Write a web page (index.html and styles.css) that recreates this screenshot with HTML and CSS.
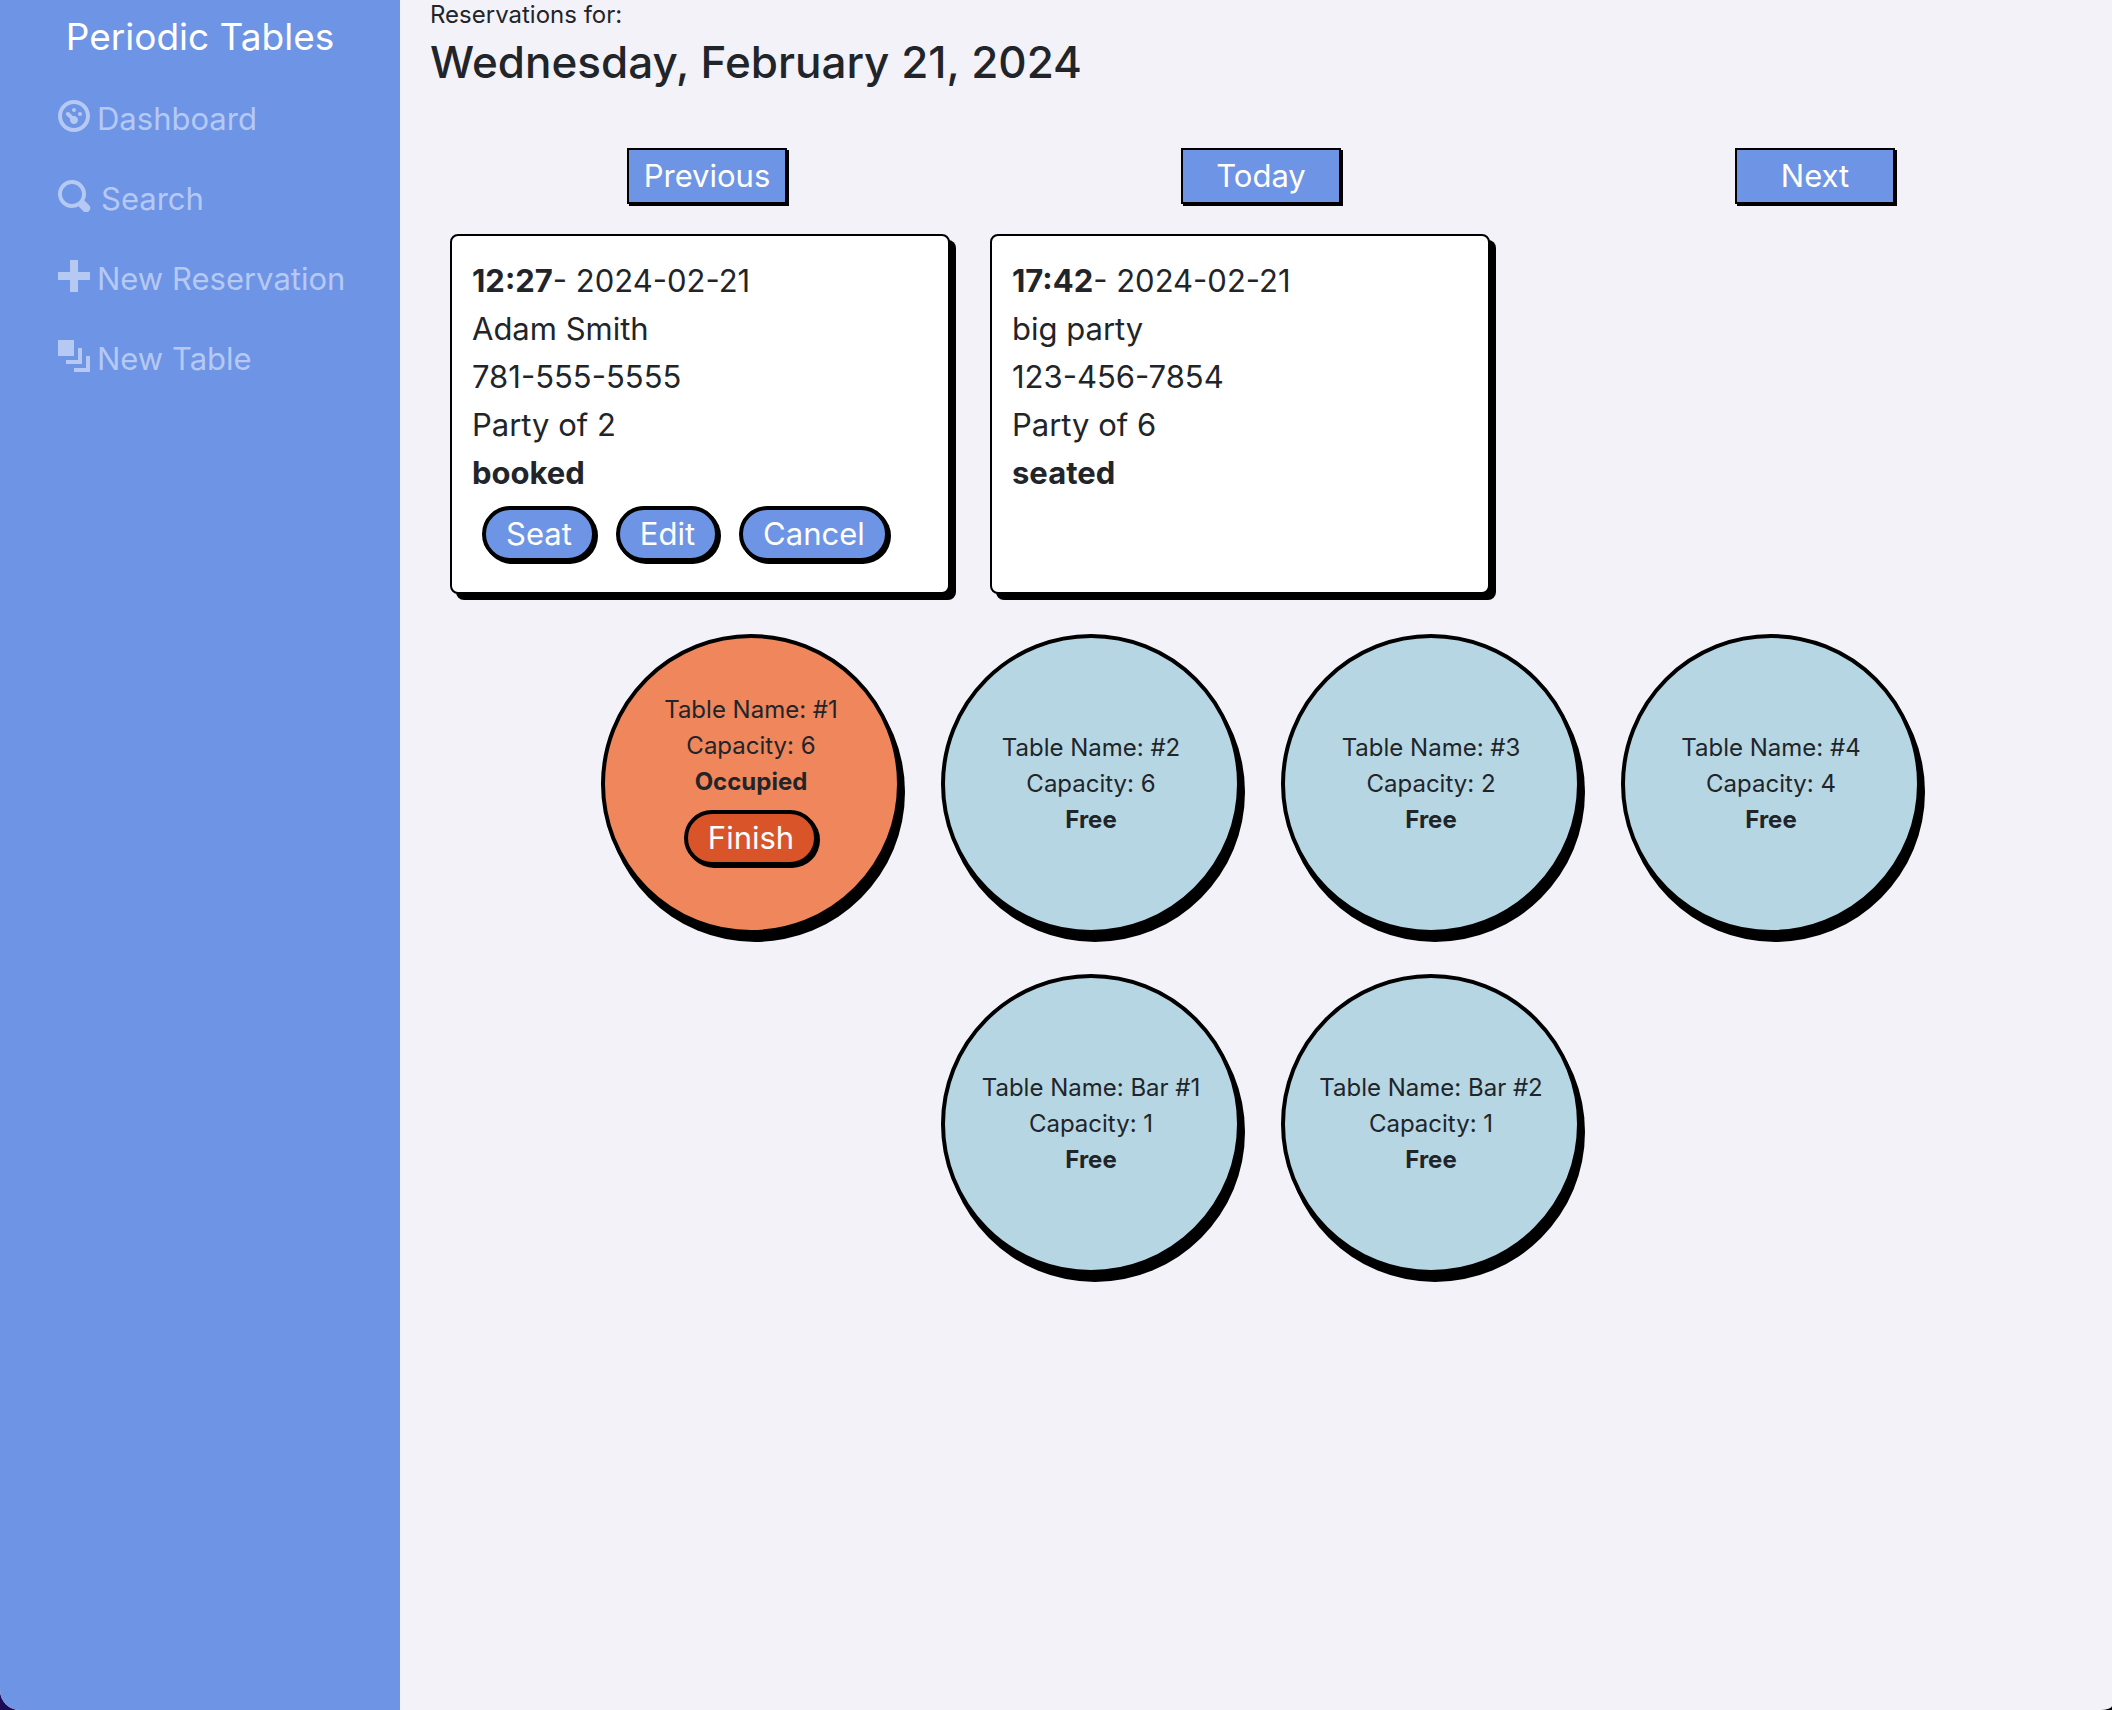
FILE: index.html
```html
<!DOCTYPE html>
<html lang="en">
<head>
  <meta charset="utf-8">
  <meta name="viewport" content="width=device-width, initial-scale=1">
  <title>Periodic Tables</title>
  <link rel="stylesheet" href="styles.css">
</head>
<body>
  <div class="app">
    <nav class="sidebar" aria-label="Main">
      <a class="brand" href="#">Periodic Tables</a>
      <ul class="menu">
        <li><a class="menu-link" href="#dashboard"><svg class="menu-icon" width="32" height="32" viewBox="0 0 8 8" aria-hidden="true"><path d="M4 0c-2.200 0-4 1.800-4 4s1.800 4 4 4 4-1.800 4-4-1.800-4-4-4zm0 1c1.660 0 3 1.340 3 3s-1.340 3-3 3-3-1.340-3-3 1.340-3 3-3zm0 1c-.28 0-.5.22-.5.5s.22.5.5.5.5-.22.5-.5-.22-.5-.5-.5zm-1.560 1a.5.5 0 0 0-.34.84l.96.91c-.02.08-.06.16-.06.25 0 .55.45 1 1 1s1-.45 1-1-.45-1-1-1c-.09 0-.17.04-.25.06l-.91-.91a.5.5 0 0 0-.4-.15zm3.060 0c-.28 0-.5.22-.5.5s.22.5.5.5.5-.22.5-.5-.22-.5-.5-.5z"/></svg>Dashboard</a></li>
        <li><a class="menu-link" href="#search"><svg class="menu-icon" width="36" height="32" viewBox="0 0 9 8" aria-hidden="true"><path d="M3.500 0c-1.930 0-3.500 1.570-3.500 3.500s1.570 3.500 3.500 3.500c.59 0 1.170-.14 1.660-.41a1 1 0 0 0 .13.13l1 1a1.020 1.020 0 1 0 1.440-1.440l-1-1a1 1 0 0 0-.16-.13c.27-.49.44-1.060.44-1.660 0-1.930-1.550-3.500-3.500-3.500zm0 1c1.390 0 2.500 1.110 2.500 2.500 0 .66-.24 1.270-.66 1.720l-.03.03a1 1 0 0 0-.13.13c-.44.4-1.040.63-1.690.63-1.390 0-2.500-1.110-2.500-2.500s1.110-2.500 2.500-2.500z"/></svg>Search</a></li>
        <li><a class="menu-link" href="#new-reservation"><svg class="menu-icon" width="32" height="32" viewBox="0 0 8 8" aria-hidden="true"><path d="M3 0v3h-3v2h3v3h2v-3h3v-2h-3v-3h-2z"/></svg>New Reservation</a></li>
        <li><a class="menu-link" href="#new-table"><svg class="menu-icon" width="32" height="32" viewBox="0 0 8 8" aria-hidden="true"><path d="M0 0v4h4v-4h-4zm5 2v3h-3v1h4v-4h-1zm2 2v3h-3v1h4v-4h-1z"/></svg>New Table</a></li>
      </ul>
    </nav>

    <main class="content">
      <header>
        <p class="eyebrow">Reservations for:</p>
        <h1 class="date">Wednesday, February 21, 2024</h1>
      </header>

      <div class="day-nav">
        <button class="day-button" type="button">Previous</button>
        <button class="day-button" type="button">Today</button>
        <button class="day-button" type="button">Next</button>
      </div>

      <section class="reservations" aria-label="Reservations">
        <article class="card">
          <p><strong>12:27</strong>- 2024-02-21</p>
          <p>Adam Smith</p>
          <p>781-555-5555</p>
          <p>Party of 2</p>
          <p><strong>booked</strong></p>
          <div class="card-actions">
            <button class="pill" type="button">Seat</button>
            <button class="pill" type="button">Edit</button>
            <button class="pill" type="button">Cancel</button>
          </div>
        </article>
        <article class="card">
          <p><strong>17:42</strong>- 2024-02-21</p>
          <p>big party</p>
          <p>123-456-7854</p>
          <p>Party of 6</p>
          <p><strong>seated</strong></p>
        </article>
      </section>

      <section class="tables" aria-label="Tables">
        <article class="seating seating-occupied">
          <p>Table Name: #1</p>
          <p>Capacity: 6</p>
          <p><strong>Occupied</strong></p>
          <button class="pill pill-finish" type="button">Finish</button>
        </article>
        <article class="seating">
          <p>Table Name: #2</p>
          <p>Capacity: 6</p>
          <p><strong>Free</strong></p>
        </article>
        <article class="seating">
          <p>Table Name: #3</p>
          <p>Capacity: 2</p>
          <p><strong>Free</strong></p>
        </article>
        <article class="seating">
          <p>Table Name: #4</p>
          <p>Capacity: 4</p>
          <p><strong>Free</strong></p>
        </article>
        <article class="seating">
          <p>Table Name: Bar #1</p>
          <p>Capacity: 1</p>
          <p><strong>Free</strong></p>
        </article>
        <article class="seating">
          <p>Table Name: Bar #2</p>
          <p>Capacity: 1</p>
          <p><strong>Free</strong></p>
        </article>
      </section>
    </main>
  </div>
</body>
</html>
```
FILE: styles.css
```css
:root {
  --blue: #6e94e6;
  --page: #f3f2f9;
  --ink: #212529;
}

* {
  box-sizing: border-box;
}

body {
  margin: 0;
  background: linear-gradient(to right, #1d0b58 50%, #000 50%);
  color: var(--ink);
  font-family: Inter, "Liberation Sans", sans-serif;
  font-size: 31px;
  line-height: 48px;
}

p,
h1,
ul {
  margin: 0;
  padding: 0;
}

button {
  font: inherit;
  color: #fff;
  background: var(--blue);
  cursor: pointer;
}

.app {
  display: flex;
  min-height: 100vh;
  overflow: hidden;
  background: var(--page);
  border-radius: 0 0 12px 20px / 0 0 4px 20px;
}

/* Sidebar */
.sidebar {
  flex: 0 0 400px;
  background: var(--blue);
}

.brand {
  display: block;
  color: #fff;
  font-size: 37px;
  line-height: 74px;
  text-align: center;
  text-decoration: none;
}

.menu {
  margin-top: 5px;
  list-style: none;
}

.menu-link {
  display: block;
  padding-left: 58px;
  color: #b6c9f2;
  line-height: 80px;
  text-decoration: none;
}

.menu-icon {
  margin-right: 7px;
  fill: currentColor;
  vertical-align: -2px;
}

/* Dashboard */
.content {
  flex: 1;
  min-width: 0;
  padding: 0 20px 40px 30px;
}

.eyebrow {
  font-size: 24px;
  line-height: 30px;
}

.date {
  font-size: 44px;
  font-weight: 600;
  line-height: 64px;
}

@supports (font-weight: 500) {
  .date {
    font-weight: 500;
  }
}

.day-nav {
  display: grid;
  grid-template-columns: repeat(3, 1fr);
  justify-items: center;
  margin-top: 54px;
}

.day-button {
  width: 160px;
  height: 56px;
  padding: 0;
  border: 2px solid #000;
  box-shadow: 2px 2px #000;
}

.reservations {
  display: flex;
  flex-wrap: wrap;
  gap: 40px;
  padding: 30px 20px 40px;
}

.card {
  width: 500px;
  min-height: 360px;
  padding: 21px 20px;
  background: #fff;
  border: 2px solid #000;
  border-radius: 8px;
  box-shadow: 6px 6px #000;
}

.card-actions {
  display: flex;
  gap: 20px;
  padding: 9px 10px;
}

.pill {
  height: 56px;
  padding: 0 20px;
  border: 4px solid #000;
  border-radius: 28px;
  box-shadow: 2px 2px #000;
}

.tables {
  display: flex;
  flex-wrap: wrap;
  justify-content: center;
  gap: 40px;
  padding: 0 20px;
}

.seating {
  display: flex;
  flex-direction: column;
  align-items: center;
  justify-content: center;
  width: 300px;
  height: 300px;
  background: #b6d6e3;
  border: 4px solid #000;
  border-radius: 50%;
  box-shadow: 4px 8px #000;
  font-size: 24px;
  line-height: 36px;
}

.seating-occupied {
  background: #ef865c;
}

.pill-finish {
  margin: 10px;
  background: #da5429;
  font-size: 31px;
}
```
